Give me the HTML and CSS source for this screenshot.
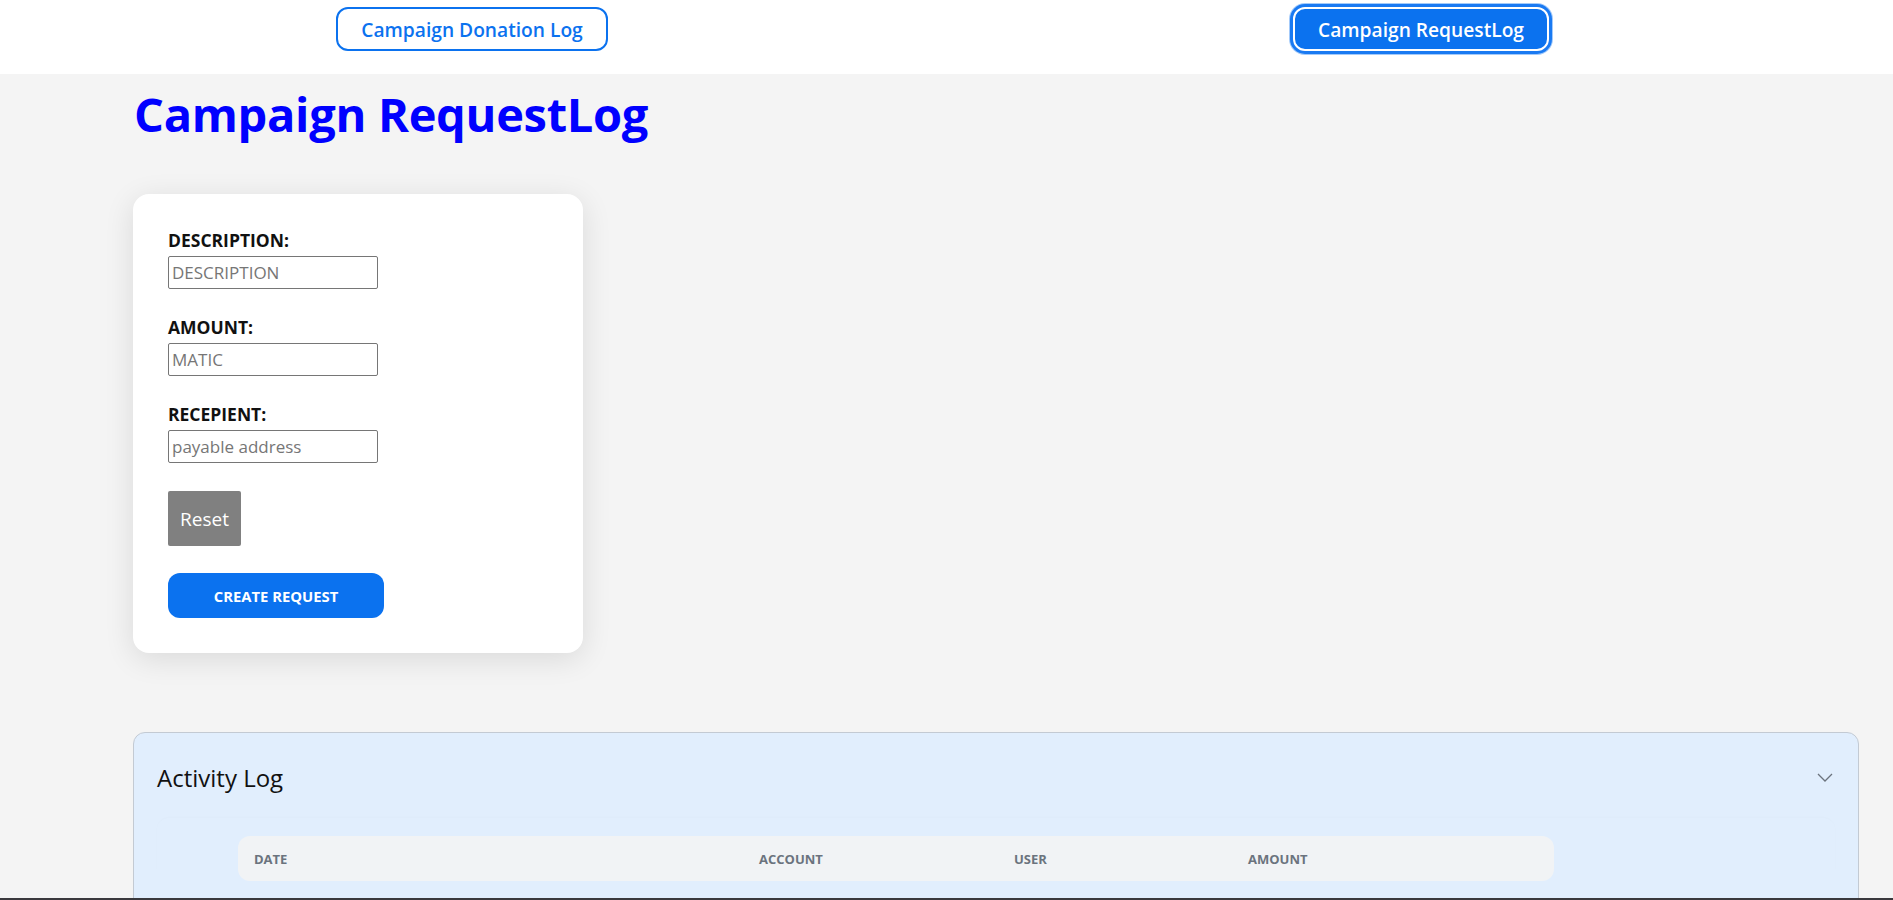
FILE: index.html
```html
<!DOCTYPE html>
<html lang="en">
<head>
<meta charset="utf-8">
<title>Campaign RequestLog</title>
<link rel="stylesheet" href="styles.css">
</head>
<body>
<nav class="topnav">
  <div class="nav-slot"><button class="nav-btn">Campaign Donation Log</button></div>
  <div class="nav-slot nav-slot-right"><button class="nav-btn nav-btn-active">Campaign RequestLog</button></div>
</nav>
<main class="page">
  <h1 class="page-title">Campaign RequestLog</h1>
  <form class="request-card">
    <div class="field">
      <label class="field-label">DESCRIPTION:</label>
      <input class="field-input" type="text" placeholder="DESCRIPTION">
    </div>
    <div class="field">
      <label class="field-label">AMOUNT:</label>
      <input class="field-input" type="text" placeholder="MATIC">
    </div>
    <div class="field">
      <label class="field-label">RECEPIENT:</label>
      <input class="field-input" type="text" placeholder="payable address">
    </div>
    <button type="reset" class="reset-btn">Reset</button>
    <button type="button" class="create-btn">CREATE REQUEST</button>
  </form>
  <section class="activity">
    <div class="activity-head">
      <span class="activity-title">Activity Log</span>
      <svg class="chevron" width="16" height="9" viewBox="0 0 16 9"><path d="M1 1 L8 8 L15 1" fill="none" stroke="#6b737d" stroke-width="1.3"/></svg>
    </div>
    <div class="activity-body">
      <div class="log-table">
        <div class="log-head">
          <span class="log-col">DATE</span>
          <span class="log-col">ACCOUNT</span>
          <span class="log-col">USER</span>
          <span class="log-col">AMOUNT</span>
        </div>
      </div>
    </div>
  </section>
</main>
<div class="bottom-edge"></div>
</body>
</html>
```
FILE: styles.css
```css
* { box-sizing: border-box; }
html, body { margin: 0; padding: 0; }
body {
  background: #f4f4f4;
  font-family: "Segoe UI", "Open Sans", "Noto Sans", sans-serif;
  color: #111;
  height: 900px;
  overflow: hidden;
}
.topnav {
  display: flex;
  background: #fff;
  height: 74px;
  padding-top: 7px;
}
.nav-slot {
  flex: 1;
  display: flex;
  justify-content: center;
  align-items: flex-start;
}
.nav-slot-right { padding-left: 5px; }
.nav-btn {
  height: 44px;
  padding: 0 23px;
  border: 2px solid #0b72ef;
  border-radius: 12px;
  background: #fff;
  color: #0b72ef;
  font-family: "Open Sans", sans-serif;
  font-weight: 600;
  font-size: 19.2px;
  cursor: pointer;
}
.nav-btn-active {
  background: #0b72ef;
  color: #fff;
  border-color: #fff;
  box-shadow: 0 0 0 3px #1a7af2, 0 0 0 4px rgba(26,122,242,0.4);
}
.page {
  padding: 0 34px 0 133px;
}
.page-title {
  margin: 7px 0 0 1px;
  font-family: "Open Sans", sans-serif;
  font-weight: 700;
  font-size: 47px;
  line-height: 66px;
  color: #0000ff;
  letter-spacing: -0.3px;
}
.request-card {
  margin-top: 47px;
  width: 450px;
  background: #fff;
  border-radius: 16px;
  padding: 34px 35px 35px;
  box-shadow: 0 6px 30px rgba(0,0,0,0.11);
  display: flex;
  flex-direction: column;
  align-items: flex-start;
}
.field {
  display: flex;
  flex-direction: column;
  gap: 4px;
  margin-bottom: 26px;
}
.field:nth-of-type(3) { margin-bottom: 28px; }
.field-label {
  font-family: "Open Sans", sans-serif;
  font-weight: 700;
  font-size: 17.5px;
  line-height: 24px;
  color: #111;
}
.field-input {
  width: 210px;
  height: 33px;
  border: 1px solid #767676;
  border-radius: 2px;
  padding: 0 3px;
  font-family: "Open Sans", sans-serif;
  font-size: 17px;
  color: #222;
  background: #fff;
}
.field-input::placeholder { color: #767676; }
.reset-btn {
  width: 73px;
  height: 55px;
  border: none;
  border-radius: 2px;
  background: #808080;
  color: #fff;
  font-family: "Open Sans", sans-serif;
  font-size: 19px;
  padding: 0;
}
.create-btn {
  margin-top: 27px;
  width: 216px;
  height: 45px;
  border: none;
  border-radius: 12px;
  background: #0b72ef;
  color: #fff;
  font-family: "Open Sans", sans-serif;
  font-weight: 700;
  font-size: 14.8px;
}
.activity {
  margin-top: 79px;
  background: #e1eefd;
  border: 1px solid #c3cad3;
  border-radius: 12px;
  height: 200px;
}
.activity-head {
  display: flex;
  justify-content: space-between;
  align-items: center;
  padding: 28px 25px 24px 23px;
}
.activity-title {
  font-family: "Open Sans", sans-serif;
  font-size: 24px;
  line-height: 33px;
  color: #111;
}
.chevron { display: block; }
.activity-body {
  margin: 0 23px;
  padding: 18px 0 0 81px;
  border-radius: 12px;
  box-shadow: 0 -1px 2px rgba(0,0,0,0.015);
}
.log-table { width: 1316px; }
.log-head {
  display: grid;
  grid-template-columns: 505px 255px 234px 1fr;
  height: 45px;
  align-items: center;
  background: #f1f3f5;
  border-radius: 12px;
}
.log-col {
  padding-left: 16px;
  font-family: "Open Sans", sans-serif;
  font-weight: 700;
  font-size: 13px;
  color: #6b737e;
}
.bottom-edge {
  position: fixed;
  left: 0;
  right: 0;
  bottom: 0;
  height: 2px;
  background: #3a393d;
}
```
